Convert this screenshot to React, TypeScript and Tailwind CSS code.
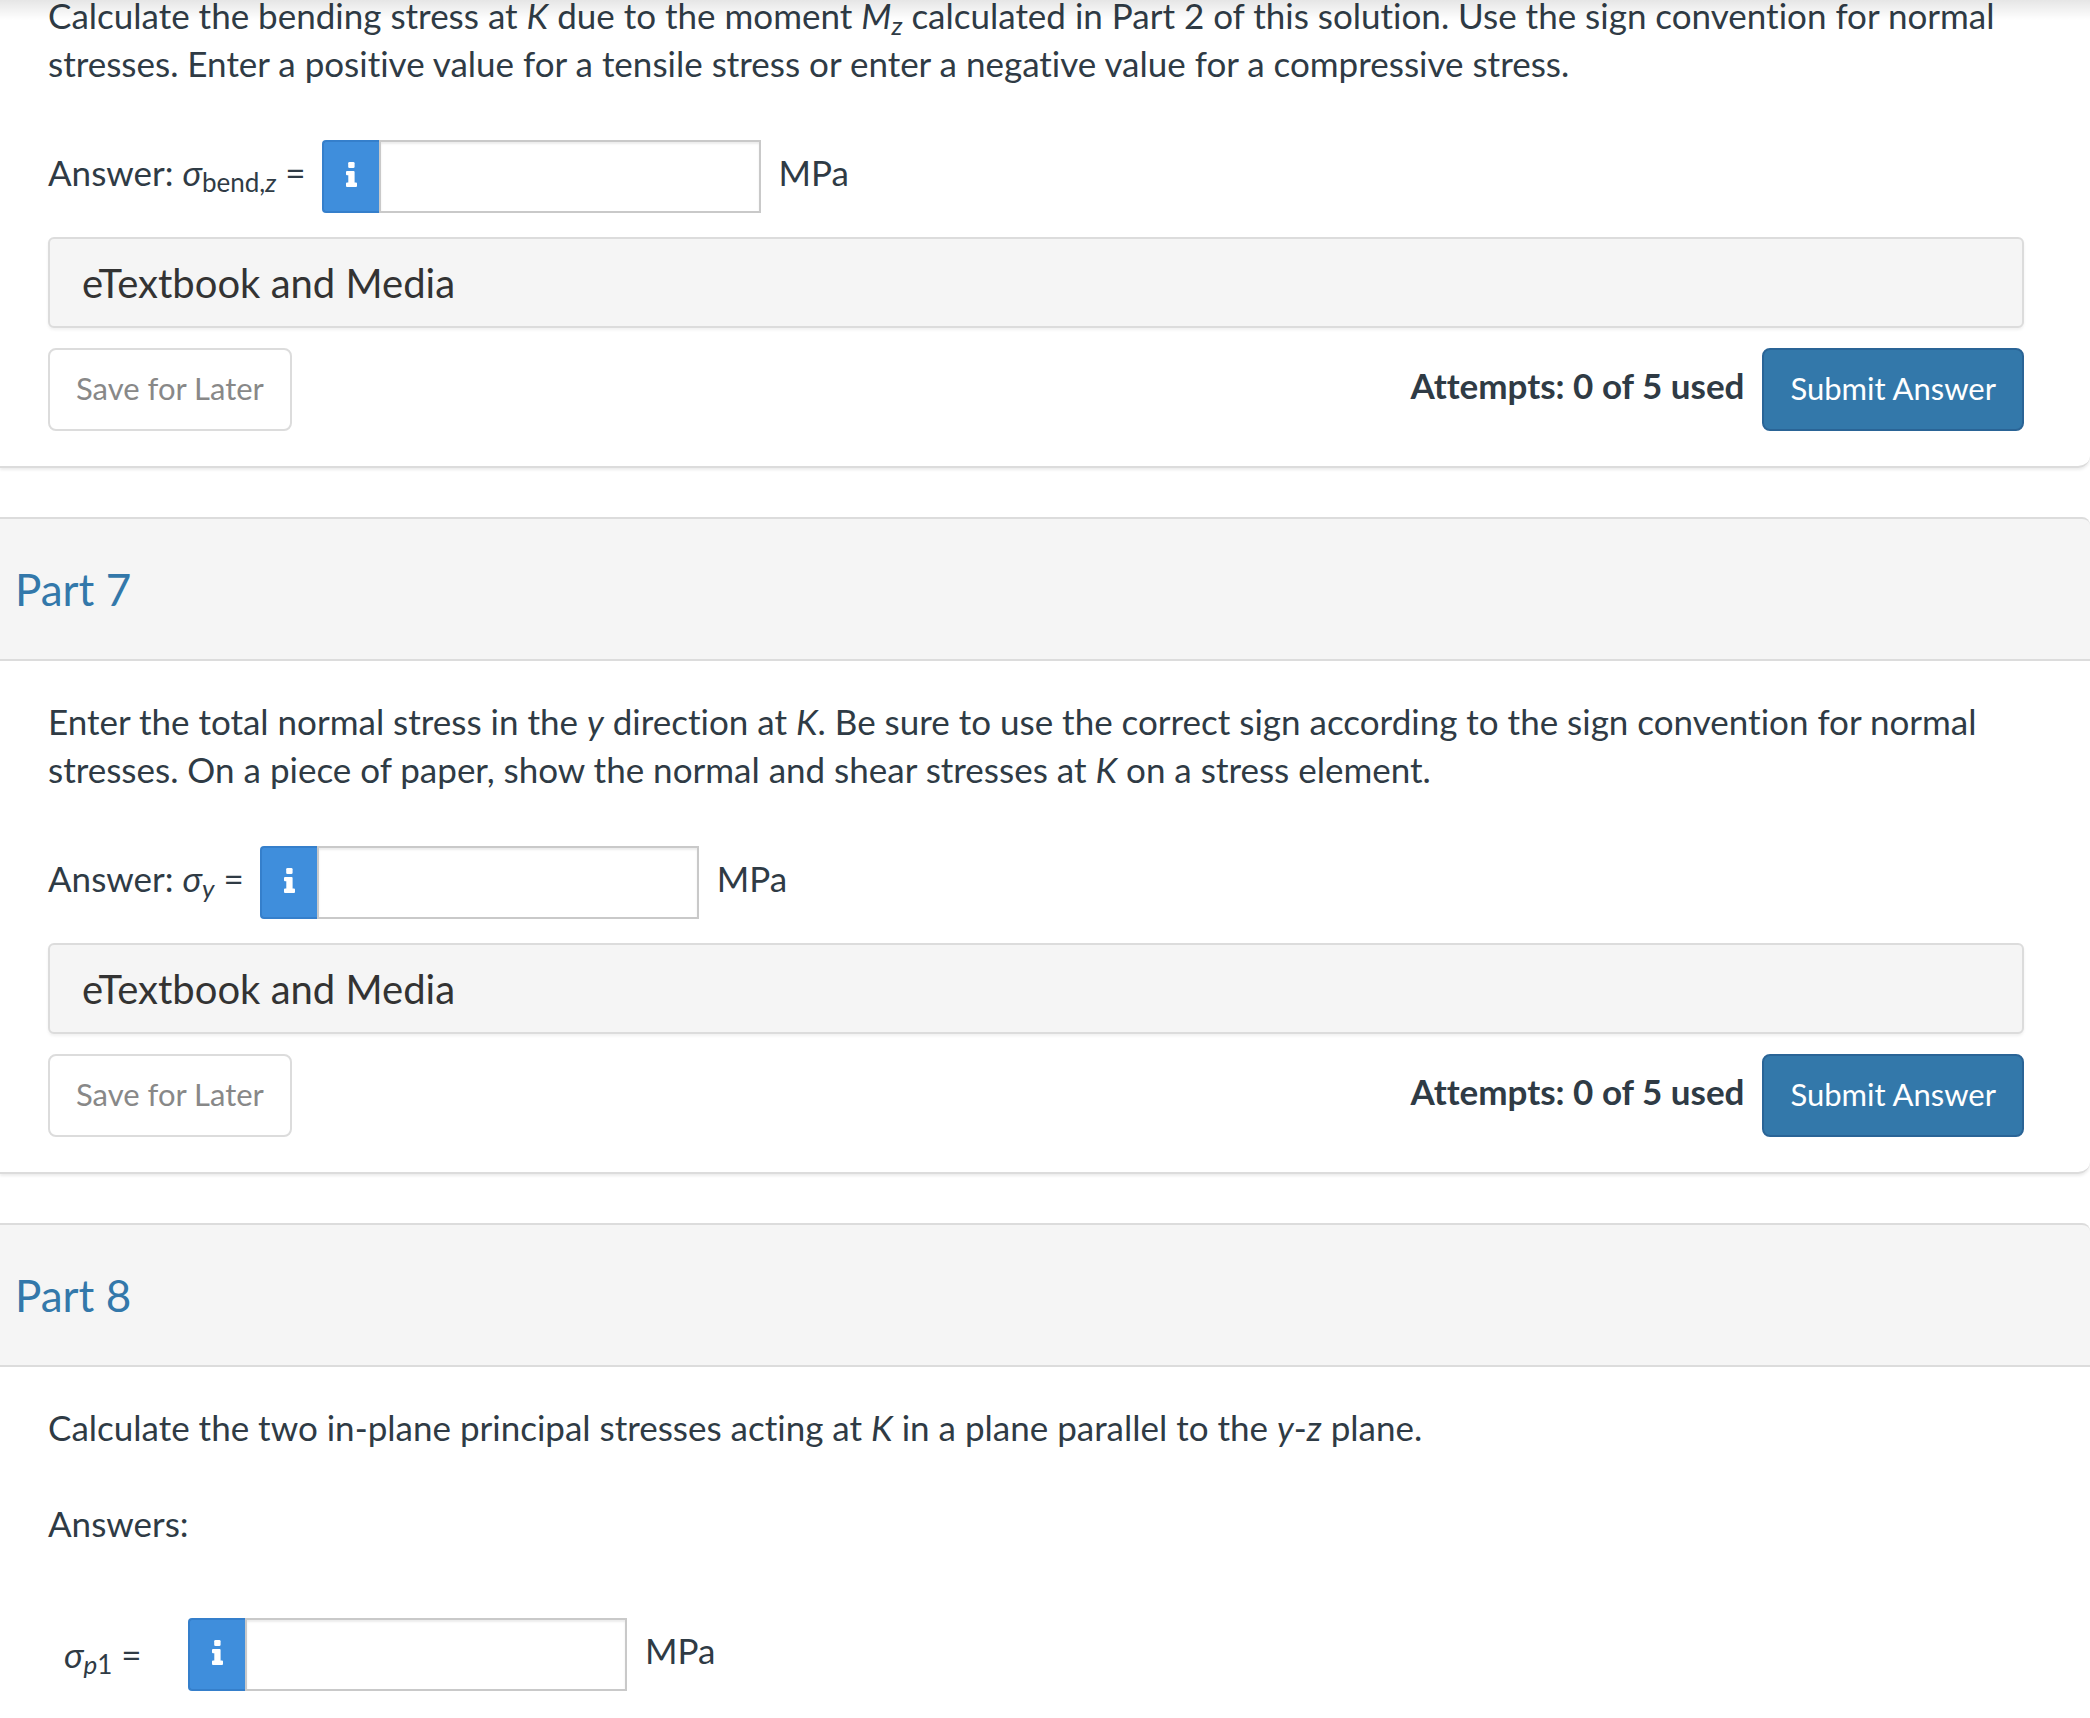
import type { ReactNode } from "react";

function Sub({ children }: { children: ReactNode }) {
  return <sub className="relative -bottom-1.5 text-[26px] leading-none align-baseline">{children}</sub>;
}

function InfoIcon() {
  return (
    <svg viewBox="0 0 11 25" className="h-[25px] w-[11px]" fill="currentColor" aria-hidden="true">
      <rect x="2.200" y="0" width="6.400" height="6" rx="1.300" />
      <path d="M1 9h6.600a1 1 0 0 1 1 1v10.500h1.400a1 1 0 0 1 1 1v2.500a1 1 0 0 1-1 1h-9a1 1 0 0 1-1-1v-2.500a1 1 0 0 1 1-1h1.300v-7.300h-1.300a1 1 0 0 1-1-1v-2.200a1 1 0 0 1 1-1z" />
    </svg>
  );
}

function AnswerField({ id }: { id: string }) {
  return (
    <div className="flex items-center gap-[18px]">
      <div className="flex h-[73px]">
        <button
          type="button"
          aria-label="Answer information"
          className="flex w-[57px] items-center justify-center rounded-l-[4px] border-2 border-r-0 border-[#357fcb] bg-[#3f8edc] pb-1 text-white"
        >
          <InfoIcon />
        </button>
        <input
          id={id}
          type="text"
          className="w-[382px] border-2 border-[#c9c9c9] bg-white px-4 shadow-[inset_0_2px_2px_rgba(0,0,0,0.08)] outline-none"
        />
      </div>
      <label htmlFor={id} className="-mt-2.5">
        MPa
      </label>
    </div>
  );
}

function AnswerRow({ id, label }: { id: string; label: ReactNode }) {
  return (
    <div className="mt-[53px] flex items-center gap-4">
      <label htmlFor={id} className="-mt-2.5">
        {label}
      </label>
      <AnswerField id={id} />
    </div>
  );
}

function Actions() {
  return (
    <>
      <button
        type="button"
        className="mt-6 block h-[91px] w-full rounded-md border-2 border-[#dcdcdc] bg-[#f5f5f5] px-8 text-left text-[40px] text-[#333] shadow-[0_2px_3px_rgba(0,0,0,0.06)]"
      >
        eTextbook and Media
      </button>
      <div className="mt-5 flex items-center justify-between">
        <button
          type="button"
          className="h-[83px] rounded-lg border-2 border-[#dcdcdc] bg-white px-[26px] pb-1 text-[31px] text-[#888]"
        >
          Save for Later
        </button>
        <div className="flex items-center gap-[18px]">
          <span className="-mt-2.5 font-bold">Attempts: 0 of 5 used</span>
          <button
            type="button"
            className="h-[83px] rounded-lg border-2 border-[#2a6496] bg-[#3378aa] px-[26px] pb-1 text-[31px] text-white"
          >
            Submit Answer
          </button>
        </div>
      </div>
    </>
  );
}

function PartHeader({ title }: { title: string }) {
  return (
    <header className="mt-[49px] rounded-tr-lg border-y-2 border-[#dcdcdc] bg-[#f5f5f5] px-[15px] py-[43px]">
      <h2 className="text-[44px] leading-[54px] text-[#3378aa]">{title}</h2>
    </header>
  );
}

export default function App() {
  return (
    <main className="min-h-screen overflow-hidden bg-white font-['Lato',sans-serif] text-[35px] leading-[48px] text-[#2f3b45] [font-variant-ligatures:no-common-ligatures]">
      <div className="pointer-events-none absolute inset-x-0 top-0 h-5 bg-linear-to-b from-black/10 to-transparent" />
      <section className="rounded-br-xl border-b-2 border-[#dcdcdc] pr-[66px] pb-[35px] pl-12 shadow-[0_2px_3px_rgba(0,0,0,0.08)]">
        <p className="-mt-[9px]">
          Calculate the bending stress at <i>K</i> due to the moment <i>M</i>
          <Sub>
            <i>z</i>
          </Sub>{" "}
          calculated in Part 2 of this solution. Use the sign convention for normal stresses. Enter a positive value
          for a tensile stress or enter a negative value for a compressive stress.
        </p>
        <AnswerRow
          id="sigma-bend-z"
          label={
            <>
              Answer: <i>σ</i>
              <Sub>
                bend,<i>z</i>
              </Sub>{" "}
              =
            </>
          }
        />
        <Actions />
      </section>

      <PartHeader title="Part 7" />
      <section className="rounded-br-xl border-b-2 border-[#dcdcdc] pt-9 pr-[66px] pb-[35px] pl-12 shadow-[0_2px_3px_rgba(0,0,0,0.08)]">
        <p>
          Enter the total normal stress in the <i>y</i> direction at <i>K</i>. Be sure to use the correct sign
          according to the sign convention for normal stresses. On a piece of paper, show the normal and shear stresses
          at <i>K</i> on a stress element.
        </p>
        <AnswerRow
          id="sigma-y"
          label={
            <>
              Answer: <i>σ</i>
              <Sub>
                <i>y</i>
              </Sub>{" "}
              =
            </>
          }
        />
        <Actions />
      </section>

      <PartHeader title="Part 8" />
      <section className="pt-9 pr-[66px] pl-12">
        <p>
          Calculate the two in-plane principal stresses acting at <i>K</i> in a plane parallel to the <i>y</i>-<i>z</i>{" "}
          plane.
        </p>
        <p className="mt-12">Answers:</p>
        <div className="mt-[71px] flex items-center pl-4">
          <label htmlFor="sigma-p1" className="-mt-0.5 w-[124px]">
            <i>σ</i>
            <Sub>
              <i>p</i>1
            </Sub>{" "}
            =
          </label>
          <AnswerField id="sigma-p1" />
        </div>
      </section>
    </main>
  );
}
